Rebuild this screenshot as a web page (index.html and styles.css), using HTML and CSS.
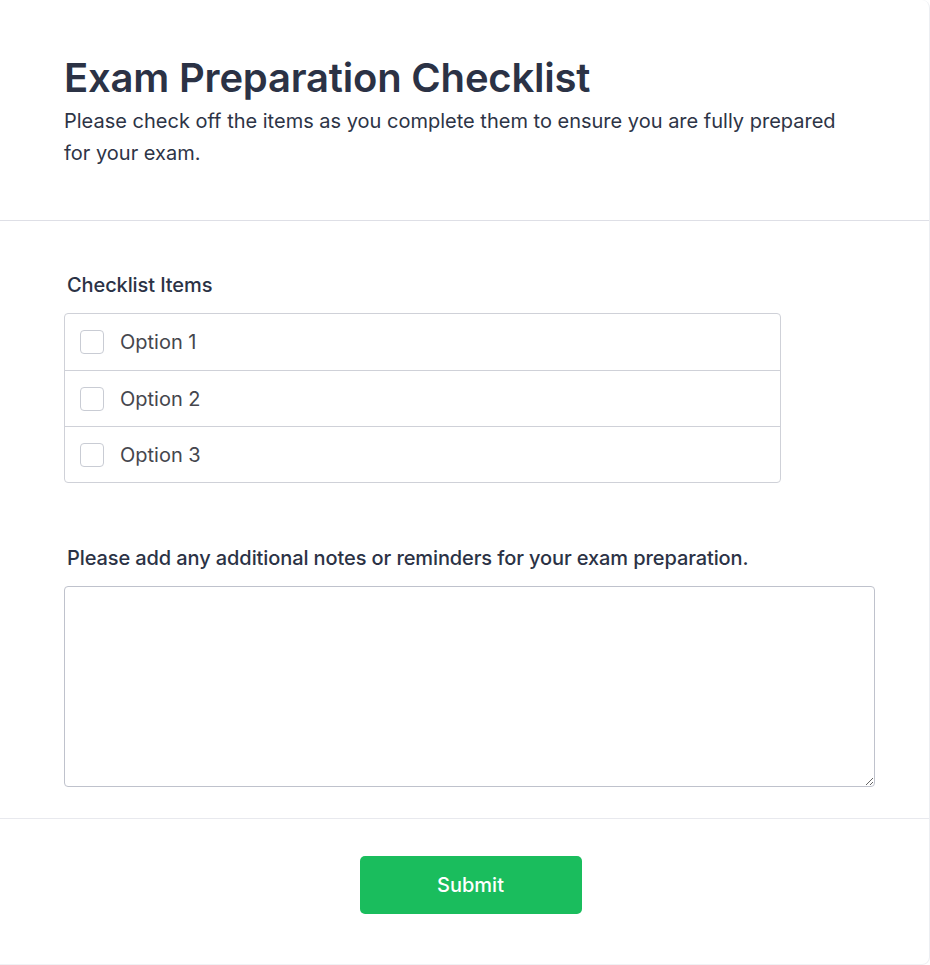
FILE: index.html
```html
<!DOCTYPE html>
<html lang="en">
<head>
<meta charset="utf-8">
<title>Exam Preparation Checklist</title>
<link rel="stylesheet" href="styles.css">
</head>
<body>
<div class="card">
  <header class="header">
    <h1 class="title">Exam Preparation Checklist</h1>
    <p class="subtitle">Please check off the items as you complete them to ensure you are fully prepared for your exam.</p>
  </header>
  <section class="body">
    <div class="field">
      <div class="label">Checklist Items</div>
      <div class="checklist">
        <label class="item"><span class="box"></span><span class="opt">Option 1</span></label>
        <label class="item"><span class="box"></span><span class="opt">Option 2</span></label>
        <label class="item"><span class="box"></span><span class="opt">Option 3</span></label>
      </div>
    </div>
    <div class="field notes">
      <div class="label">Please add any additional notes or reminders for your exam preparation.</div>
      <textarea class="textarea"></textarea>
    </div>
  </section>
  <footer class="footer">
    <button class="submit" type="button">Submit</button>
  </footer>
</div>
</body>
</html>
```
FILE: styles.css
```css
html, body {
  margin: 0;
  padding: 0;
  background: #ffffff;
}
body {
  font-family: Inter, "Noto Sans", sans-serif;
  color: #2d3446;
}
.card {
  width: 930px;
  height: 965px;
  box-sizing: border-box;
  border-right: 1px solid #eceef2;
  border-bottom: 1px solid #f0f1f4;
  border-radius: 0 8px 8px 0;
  background: #fff;
}
.header {
  padding: 54px 64px 51px;
  border-bottom: 1px solid #dedfe6;
}
.title {
  margin: 0 0 3px;
  font-size: 40px;
  line-height: 48px;
  font-weight: 600;
  letter-spacing: -0.2px;
  color: #2b3245;
}
.subtitle {
  margin: 0;
  font-size: 20px;
  line-height: 32px;
  color: #2d3446;
}
.body {
  padding: 50px 54px 31px 64px;
  border-bottom: 1px solid #e8e9ee;
}
.label {
  font-size: 20px;
  line-height: 28px;
  font-weight: 500;
  letter-spacing: -0.1px;
  color: #2b3245;
  padding-left: 3px;
  margin-bottom: 14px;
}
.checklist {
  width: 717px;
  box-sizing: border-box;
  border: 1px solid #cfd1d8;
  border-radius: 4px;
}
.item {
  display: flex;
  align-items: center;
  gap: 16px;
  height: 55px;
  padding: 0 15px;
  border-top: 1px solid #cfd1d8;
}
.item:first-child {
  border-top: none;
  height: 56px;
}
.box {
  width: 24px;
  height: 24px;
  box-sizing: border-box;
  border: 1px solid #c9ccd4;
  border-radius: 4px;
  background: #fff;
}
.opt {
  font-size: 20px;
  color: #45464d;
}
.notes {
  margin-top: 61px;
}
.notes .label {
  margin-bottom: 14px;
}
.textarea {
  display: block;
  width: 811px;
  height: 201px;
  box-sizing: border-box;
  border: 1px solid #bfc2cc;
  border-radius: 4px;
  resize: vertical;
  font-family: inherit;
  font-size: 16px;
  margin: 0;
}
.footer {
  display: flex;
  justify-content: center;
  padding-top: 37px;
  padding-left: 12px;
}
.submit {
  width: 222px;
  height: 58px;
  border: none;
  border-radius: 5px;
  background: #1abd5d;
  color: #ffffff;
  font-family: Inter, sans-serif;
  font-size: 20px;
  font-weight: 500;
}
```
